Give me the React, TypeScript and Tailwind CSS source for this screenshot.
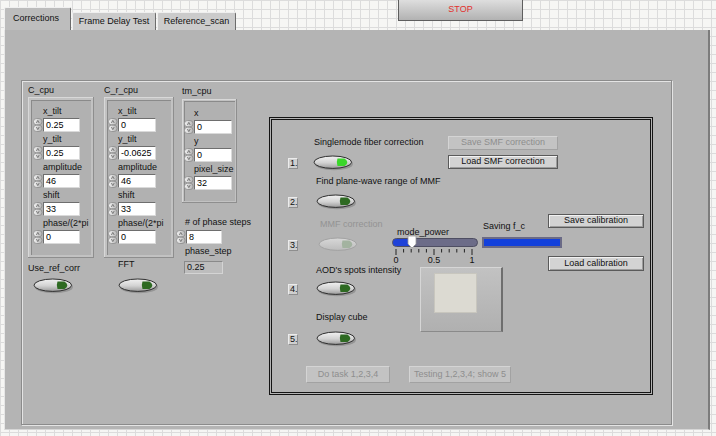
import React from "react";

const font = "font-['Liberation_Sans',Arial,sans-serif]";

function Spinner() {
  return (
    <svg width="10" height="14" viewBox="0 0 10 14" className="shrink-0 block">
      <defs>
        <linearGradient id="spg" x1="0" x2="1" y1="0" y2="0">
          <stop offset="0" stopColor="#f4f4f4" />
          <stop offset="1" stopColor="#b4b4b4" />
        </linearGradient>
      </defs>
      <rect x="0.5" y="0.5" width="8.5" height="6.3" rx="3" fill="url(#spg)" stroke="#8c8c8c" strokeWidth="0.8" />
      <rect x="0.5" y="7.2" width="8.5" height="6.3" rx="3" fill="url(#spg)" stroke="#8c8c8c" strokeWidth="0.8" />
      <path d="M3.4 5 L4.8 2.4 L6.2 5" fill="none" stroke="#666" strokeWidth="0.8" />
      <path d="M3.4 9 L4.8 11.6 L6.2 9" fill="none" stroke="#666" strokeWidth="0.8" />
    </svg>
  );
}

function Num({ value, w }: { value: string; w: string }) {
  return (
    <div className="flex items-start">
      <Spinner />
      <div
        className={`${w} h-[14px] bg-white border border-[#6e6e6e] border-r-[#dadada] border-b-[#dadada] pl-[2px] text-[9px] leading-[12px] text-black`}
      >
        {value}
      </div>
    </div>
  );
}

function NumRow({ label, value, w }: { label: string; value: string; w: string }) {
  return (
    <div className="flex flex-col">
      <div className="h-[14px] leading-[14px] text-[9px] pl-[10px] whitespace-nowrap text-[#111]">{label}</div>
      <Num value={value} w={w} />
    </div>
  );
}

function Led({ on = false, disabled = false }: { on?: boolean; disabled?: boolean }) {
  const green = on ? "#3ad62a" : disabled ? "#a3b3a0" : "#2e6a22";
  const gid = disabled ? "ledgd" : "ledg";
  return (
    <svg width="41" height="16" viewBox="0 0 41 16" className="block shrink-0">
      <defs>
        <linearGradient id="ledg" x1="0" x2="0" y1="0" y2="1">
          <stop offset="0" stopColor="#f2f2f2" />
          <stop offset="0.55" stopColor="#d2d2d2" />
          <stop offset="1" stopColor="#9a9a9a" />
        </linearGradient>
        <linearGradient id="ledgd" x1="0" x2="0" y1="0" y2="1">
          <stop offset="0" stopColor="#d8d8d8" />
          <stop offset="1" stopColor="#bcbcbc" />
        </linearGradient>
      </defs>
      {!disabled && <ellipse cx="21" cy="9" rx="19" ry="6.2" fill="#7c7c7c" opacity="0.55" />}
      <ellipse
        cx="19.8"
        cy="7.2"
        rx="18.8"
        ry="6.2"
        fill={`url(#${gid})`}
        stroke={disabled ? "#a2a2a2" : "#2e2e2e"}
        strokeWidth="1"
      />
      <path d="M24.5 3.4 H31.5 Q37.2 7.2 31.5 11 H24.5 Q23 7.2 24.5 3.4Z" fill={green} />
    </svg>
  );
}

function StepNum({ n }: { n: string }) {
  return (
    <div className="w-[10px] h-[11px] bg-[#cfcfcf] border border-[#ececec] border-r-[#8e8e8e] border-b-[#8e8e8e] text-[9px] leading-[9px] pl-[1px] text-[#111] shrink-0">
      {n}
    </div>
  );
}

function Btn({ children, cls }: { children: React.ReactNode; cls: string }) {
  return (
    <div
      className={`${cls} flex items-center justify-center bg-[#d3d3d3] border border-[#5a5a5a] shadow-[inset_1px_1px_0_#f2f2f2,inset_-1px_-1px_0_#9c9c9c] text-[9px] text-[#111] whitespace-nowrap`}
    >
      {children}
    </div>
  );
}

function DisBtn({ children, cls }: { children: React.ReactNode; cls: string }) {
  return (
    <div
      className={`${cls} flex items-center justify-center bg-[#c3c3c3] border border-[#d4d4d4] border-r-[#a2a2a2] border-b-[#a2a2a2] text-[9px] text-[#8e8e8e] whitespace-nowrap`}
    >
      {children}
    </div>
  );
}

function Tab({ label, cls }: { label: string; cls: string }) {
  return (
    <div
      className={`${cls} h-[18px] bg-[#cbcbcb] border-t border-l border-[#efefef] border-r border-r-[#6c6c6c] rounded-t-[2px] flex items-center justify-center text-[9px] text-[#111]`}
    >
      {label}
    </div>
  );
}

export default function App() {
  return (
    <div
      className={`${font} w-[716px] h-[436px] overflow-hidden bg-[#f6f6f4] bg-[linear-gradient(to_right,#dcdcdc_1px,transparent_1px),linear-gradient(to_bottom,#dcdcdc_1px,transparent_1px)] bg-[size:9px_9px]`}
    >
      {/* top strip: tabs + stop */}
      <div className="h-[30px] flex items-end pl-[4px]">
        <div className="w-[67px] h-[23px] bg-[#bdbdbd] border-t border-l border-[#f0f0f0] border-r border-r-[#6c6c6c] rounded-t-[2px] flex items-center pl-[8px] text-[9px] text-[#111]">
          Corrections
        </div>
        <Tab label="Frame Delay Test" cls="w-[84px] ml-[1px]" />
        <Tab label="Reference_scan" cls="w-[79px] ml-[1px]" />
        <div className="self-start ml-[162px] w-[125px] h-[21px] bg-gradient-to-b from-[#dedede] to-[#b2b2b2] border border-[#5e5e5e] border-t-0 flex items-center justify-center text-[9px] text-[#e2302c]">
          STOP
        </div>
      </div>

      {/* main panel */}
      <div className="ml-[4px] w-[706px] h-[400px] bg-[#b4b4b4] border-l border-l-[#e6e6e6] border-r-2 border-r-[#7c7c7c] border-b border-b-[#d6d6d6] pt-[50px] pl-[16px]">
        <div className="w-[651px] h-[345px] border border-[#8b8b8b] shadow-[1px_1px_0_#e4e4e4,inset_1px_1px_0_#e4e4e4] flex items-start pl-[6px] pt-[3px]">
          {/* C_cpu */}
          <div className="w-[66px] flex flex-col">
            <div className="h-[12px] leading-[12px] text-[9px] text-[#111]">C_cpu</div>
            <div className="mt-[1px] w-[66px] h-[161px] bg-[#c2c2c2] p-[3px] shadow-[inset_-1px_-1px_0_#8e8e8e,inset_1px_1px_0_#d8d8d8]">
              <div className="h-full bg-[#b1b1b1] shadow-[inset_1px_1px_0_#8a8a8a] pl-[2px] pt-[4px] flex flex-col">
                <NumRow label="x_tilt" value="0.25" w="w-[37px]" />
                <NumRow label="y_tilt" value="0.25" w="w-[37px]" />
                <NumRow label="amplitude" value="46" w="w-[37px]" />
                <NumRow label="shift" value="33" w="w-[37px]" />
                <NumRow label="phase/(2*pi" value="0" w="w-[37px]" />
              </div>
            </div>
            <div className="mt-[4px] h-[12px] leading-[12px] text-[9px] text-[#111] whitespace-nowrap">Use_ref_corr</div>
            <div className="mt-[4px] ml-[5px]">
              <Led />
            </div>
          </div>

          {/* C_r_cpu */}
          <div className="ml-[10px] w-[70px] flex flex-col">
            <div className="h-[12px] leading-[12px] text-[9px] text-[#111]">C_r_cpu</div>
            <div className="mt-[1px] w-[70px] h-[161px] bg-[#c2c2c2] p-[3px] shadow-[inset_-1px_-1px_0_#8e8e8e,inset_1px_1px_0_#d8d8d8]">
              <div className="h-full bg-[#b1b1b1] shadow-[inset_1px_1px_0_#8a8a8a] pl-[1px] pt-[4px] flex flex-col">
                <NumRow label="x_tilt" value="0" w="w-[38px]" />
                <NumRow label="y_tilt" value="-0.0625" w="w-[38px]" />
                <NumRow label="amplitude" value="46" w="w-[38px]" />
                <NumRow label="shift" value="33" w="w-[38px]" />
                <NumRow label="phase/(2*pi" value="0" w="w-[38px]" />
              </div>
            </div>
            <div className="mt-[0px] ml-[14px] h-[12px] leading-[12px] text-[9px] text-[#111]">FFT</div>
            <div className="mt-[8px] ml-[14px]">
              <Led />
            </div>
          </div>

          {/* tm_cpu */}
          <div className="ml-[8px] w-[55px] flex flex-col">
            <div className="mt-[1px] h-[12px] leading-[12px] text-[9px] text-[#111]">tm_cpu</div>
            <div className="mt-[2px] w-[55px] h-[104px] bg-[#c2c2c2] p-[2px] shadow-[inset_-1px_-1px_0_#8e8e8e,inset_1px_1px_0_#d8d8d8]">
              <div className="h-full bg-[#b1b1b1] shadow-[inset_1px_1px_0_#8a8a8a] pt-[5px] flex flex-col">
                <NumRow label="x" value="0" w="w-[38px]" />
                <NumRow label="y" value="0" w="w-[38px]" />
                <NumRow label="pixel_size" value="32" w="w-[38px]" />
              </div>
            </div>
            <div className="mt-[13px] ml-[3px] h-[12px] leading-[12px] text-[9px] text-[#111] whitespace-nowrap">
              # of phase steps
            </div>
            <div className="mt-[2px] ml-[-6px]">
              <Num value="8" w="w-[36px]" />
            </div>
            <div className="mt-[1px] ml-[3px] h-[12px] leading-[12px] text-[9px] text-[#111] whitespace-nowrap">phase_step</div>
            <div className="mt-[4px] ml-[2px] w-[39px] h-[13px] bg-[#bdbdbd] border border-[#8a8a8a] border-r-[#d4d4d4] border-b-[#d4d4d4] pl-[2px] text-[9px] leading-[11px] text-[#111]">
              0.25
            </div>
          </div>

          {/* task box */}
          <div className="ml-[32px] mt-[33px] w-[384px] h-[278px] border-[3px] border-double border-[#141414] pl-[16px] flex flex-col">
            <div className="flex items-start">
              {/* left: steps */}
              <div className="w-[104px] flex flex-col text-[9px] text-[#111]">
                <div className="mt-[16px] ml-[26px] h-[12px] leading-[12px] whitespace-nowrap">Singlemode fiber correction</div>
                <div className="mt-[7px] flex items-center">
                  <StepNum n="1." />
                  <div className="ml-[15px]">
                    <Led on />
                  </div>
                </div>
                <div className="mt-[4px] ml-[28px] h-[12px] leading-[12px] whitespace-nowrap">Find plane-wave range of MMF</div>
                <div className="mt-[7px] flex items-center">
                  <StepNum n="2." />
                  <div className="ml-[18px]">
                    <Led />
                  </div>
                </div>
                <div className="mt-[8px] ml-[32px] h-[12px] leading-[12px] whitespace-nowrap text-[#939393]">MMF correction</div>
                <div className="mt-[7px] flex items-center">
                  <StepNum n="3." />
                  <div className="ml-[20px]">
                    <Led disabled />
                  </div>
                </div>
                <div className="mt-[11px] ml-[28px] h-[12px] leading-[12px] whitespace-nowrap">AOD's spots intensity</div>
                <div className="mt-[5px] flex items-center">
                  <StepNum n="4." />
                  <div className="ml-[18px]">
                    <Led />
                  </div>
                </div>
                <div className="mt-[14px] ml-[28px] h-[12px] leading-[12px] whitespace-nowrap">Display cube</div>
                <div className="mt-[8px] flex items-center">
                  <StepNum n="5." />
                  <div className="ml-[18px]">
                    <Led />
                  </div>
                </div>
              </div>

              {/* right region */}
              <div className="w-[258px] flex flex-col">
                <DisBtn cls="mt-[16px] ml-[56px] w-[110px] h-[14px]">Save SMF correction</DisBtn>
                <Btn cls="mt-[5px] ml-[56px] w-[110px] h-[14px]">Load SMF correction</Btn>

                <div className="mt-[45px] flex items-start">
                  {/* slider */}
                  <div className="w-[86px] pt-[12px] flex flex-col">
                    <div className="ml-[5px] h-[12px] leading-[12px] text-[9px] text-[#111]">mode_power</div>
                    <div className="relative w-[86px] h-[9px] rounded-full bg-[#6c6c88] border border-[#4e4e62] overflow-visible">
                      <div className="w-[19px] h-full rounded-l-full bg-[#1f42d8]" />
                      <svg width="10" height="14" viewBox="0 0 10 14" className="absolute left-[14px] top-[-4px]">
                        <path d="M1 1 H9 V9 L5 13 L1 9 Z" fill="#ffffff" stroke="#9a9a9a" strokeWidth="0.8" />
                      </svg>
                    </div>
                    <svg width="86" height="6" viewBox="0 0 86 6" className="mt-[2px] block">
                      {[0, 1, 2, 3, 4, 5, 6, 7, 8, 9, 10].map((i) => {
                        const x = 4 + i * 7.6;
                        const major = i === 0 || i === 5 || i === 10;
                        return <line key={i} x1={x} x2={x} y1={0} y2={major ? 6 : 3.5} stroke="#222" strokeWidth="1" />;
                      })}
                    </svg>
                    <div className="ml-[1.5px] w-[81px] flex justify-between h-[10px] leading-[10px] text-[9px] text-[#111]">
                      <span className="w-[5px] text-center">0</span>
                      <span>0.5</span>
                      <span className="w-[5px] text-center">1</span>
                    </div>
                  </div>
                  {/* saving */}
                  <div className="ml-[4px] w-[80px] pt-[6px] flex flex-col">
                    <div className="ml-[1px] h-[12px] leading-[12px] text-[9px] text-[#111]">Saving f_c</div>
                    <div className="mt-[5px] w-[80px] h-[11px] border-2 border-[#6a6a86] bg-[#1240dc]" />
                  </div>
                  {/* calibration buttons */}
                  <div className="ml-[-14px] w-[96px] flex flex-col">
                    <Btn cls="w-[96px] h-[14px]">Save calibration</Btn>
                    <Btn cls="mt-[28px] w-[96px] h-[15px]">Load calibration</Btn>
                  </div>
                </div>

                {/* picture */}
                <div className="mt-[-4px] ml-[28px] w-[83px] h-[65px] bg-gradient-to-b from-[#c2c2c2] to-[#b0b0b0] border-t border-l border-[#d6d6d6] border-r-2 border-r-[#6e6e6e] border-b border-b-[#8a8a8a] pl-[13px] pt-[5px]">
                  <div className="w-[43px] h-[40px] bg-[#dcdad2] border border-[#c8c6be]" />
                </div>
              </div>
            </div>

            <div className="mt-[19px] ml-[18px] flex">
              <DisBtn cls="w-[84px] h-[17px]">Do task 1,2,3,4</DisBtn>
              <DisBtn cls="ml-[19px] w-[102px] h-[17px]">Testing 1,2,3,4; show 5</DisBtn>
            </div>
          </div>
        </div>
      </div>
    </div>
  );
}
